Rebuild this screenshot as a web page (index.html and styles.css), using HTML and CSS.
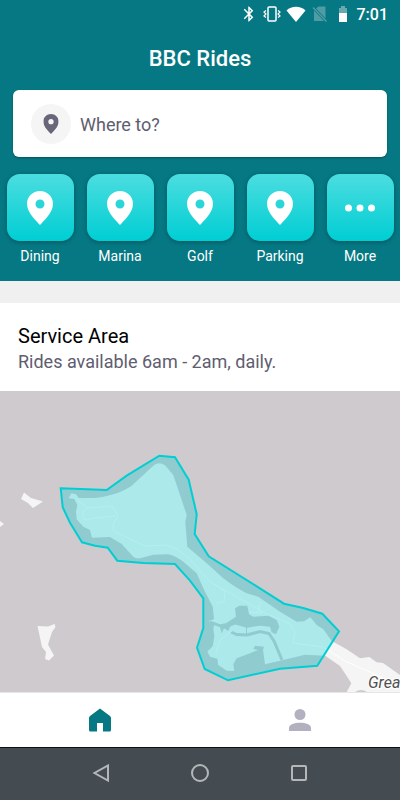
FILE: index.html
```html
<!DOCTYPE html>
<html lang="en">
<head>
    <meta charset="UTF-8">
    <meta name="viewport" content="width=device-width, initial-scale=1.0">
    <title>BBC Rides</title>
    <link rel="stylesheet" href="styles.css">
</head>
<body>

    <!-- Shared pin shape -->
    <svg class="symbols" aria-hidden="true">
        <symbol id="pin" viewBox="0 0 26 34">
            <path fill-rule="evenodd" d="M13 0C5.800 0 0 5.600 0 12.800C0 22 9 29.500 13 34C17 29.500 26 22 26 12.800C26 5.600 20.200 0 13 0ZM13 8.500A4.500 4.500 0 1 1 13 17.500A4.500 4.500 0 1 1 13 8.500Z"/>
        </symbol>
    </svg>

    <header class="header">
        <div class="status-bar">
            <svg class="status-icon" viewBox="0 0 24 24" fill="#fff"><path d="M17.710 7.710L12 2h-1v7.590L6.410 5 5 6.410 10.590 12 5 17.590 6.410 19 11 14.410V22h1l5.710-5.710-4.300-4.290 4.300-4.290zM13 5.830l1.880 1.880L13 9.590V5.830zm1.880 10.460L13 18.170v-3.760l1.880 1.880z"/></svg>
            <svg class="status-icon" viewBox="0 0 18 18" fill="none" stroke="#fff" stroke-width="1.500"><rect x="5" y="2" width="8" height="14" rx="1"/><path d="M3 5.500L1 7L3 9L1 11L3 12.500M15 5.500L17 7L15 9L17 11L15 12.500" stroke-width="1.200"/></svg>
            <svg class="status-wifi" viewBox="0 0 20 16" fill="#fff"><path d="M10 16L.5 4.500C5.500-.5 14.500-.5 19.500 4.500Z"/></svg>
            <svg class="status-icon" viewBox="0 0 18 18"><path d="M3 5.500V16H13ZM5 3.500L7.500 1.500H14.500V13.500Z" fill="#4f9ca5"/><path d="M2 2.500L15.500 16.500" stroke="#4f9ca5" stroke-width="1.500"/></svg>
            <svg class="status-icon" viewBox="0 0 18 18"><path d="M5 3H7V1H11V3H13V8H5Z" fill="#67a9b0"/><path d="M5 8H13V17H5Z" fill="#fff"/></svg>
            <span class="clock">7:01</span>
        </div>

        <h1 class="title">BBC Rides</h1>

        <form class="search">
            <label for="destination" class="search-icon" aria-label="Destination">
                <svg width="16" height="20" viewBox="0 0 26 34" fill="#686678"><use href="#pin"/></svg>
            </label>
            <input type="text" id="destination" class="search-input" placeholder="Where to?">
        </form>

        <div class="shortcuts">
            <button type="button" class="shortcut">
                <span class="tile"><svg width="26" height="34"><use href="#pin"/></svg></span>
                <span>Dining</span>
            </button>
            <button type="button" class="shortcut">
                <span class="tile"><svg width="26" height="34"><use href="#pin"/></svg></span>
                <span>Marina</span>
            </button>
            <button type="button" class="shortcut">
                <span class="tile"><svg width="26" height="34"><use href="#pin"/></svg></span>
                <span>Golf</span>
            </button>
            <button type="button" class="shortcut">
                <span class="tile"><svg width="26" height="34"><use href="#pin"/></svg></span>
                <span>Parking</span>
            </button>
            <button type="button" class="shortcut">
                <span class="tile"><svg width="32" height="8"><circle cx="4.500" cy="4" r="3.500"/><circle cx="16" cy="4" r="3.500"/><circle cx="27.500" cy="4" r="3.500"/></svg></span>
                <span>More</span>
            </button>
        </div>
    </header>

    <section class="service-area">
        <h2 class="service-title">Service Area</h2>
        <p class="service-hours">Rides available 6am - 2am, daily.</p>
    </section>

    <main class="map">
        <svg class="map-canvas" viewBox="0 391 400 301" preserveAspectRatio="xMidYMin slice">
            <!-- Small cays -->
            <g fill="#f5f5f5">
                <path d="M24 492.500L31 498L43 501.500L33 508L28 503L21 499Z"/>
                <path d="M0 521L4 524L0 527Z"/>
                <path d="M37.500 626L48 626.500L54.500 624L55.500 627L52 632L48 644.500L54 655.500L49 660.500L45 659L46 652L42 647Z"/>
            </g>

            <!-- Main island -->
            <path fill="#f5f5f5" d="M68.700 498.300L71.300 493.300L76 494.300L78.700 498L95 498Q105 497 113.300 494.300Q124 491 131.700 485.700L153 466Q158 461 165 465.300L173.300 475L186.700 515L185.300 521.700L187.300 546.700L192 550.700L206.700 563.300L223.300 578.300Q236 588 246.700 593.300L258.300 596.700L280 611.700L296.700 621.700L304 621.300L310.300 617.300L316.700 625L323.300 629.300L331.700 641L346.700 649.300L360 658.300L369.300 657L376.700 662.300L383 663L400 675V692H346.700L351.300 683.300L346.700 676L340 666L325.300 655.700L305 654.700L283.300 660L265 664.300L263 650L264 646.700L255 645.700L253.300 649L258 650L250 653.300L236.700 658.300L233.300 664L234.300 671L226.700 670.700L218.300 665L217.300 658.700L210 656.700L207.300 651.700L212.700 646L214.300 636.700L213.300 628.300L214.700 622.700L208.300 621L214 619.300L212.700 606.700L203.300 588.300L196.700 573.300L183.300 561.700Q174 555 168.300 554.300L153.300 554.700L140 558.300Q136 559 133.300 556.700L121.700 544L110 537L92 537.700L90 530L83.300 526.700L76.700 519.300L76 511.700L77.300 505L74.300 499Z"/>

            <!-- Lagoons and canals -->
            <g fill="#cfcace">
                <path d="M210 620.500L220 624.300L226 623.300L236 616.700L235 608.300L239.300 605.700L247.300 605.700L249 614.300L253.300 616.700L268.300 615.700L276.700 620L279.300 626.700L276 634.300L271.700 632.300L270 626.700L260 625.700L246.700 627.700L235 624.500L230 626.700L228.300 631L224 628.300L221.700 633.300L220 627.300L211 624Z"/>
                <path d="M355 692Q361 688 367 692Z"/>
            </g>
            <path fill="none" stroke="#cfcace" stroke-width="3" d="M231 632L236.700 634.500L247 635L260 631.500L269 633.500L274 641L282 660"/>
            <path fill="none" stroke="#cfcace" d="M246.500 626V635"/>

            <!-- Roads -->
            <g fill="none" stroke="#fff" stroke-width="1">
                <path d="M77 500L88 508L112 506L118 516L113 524L114 531L122 535L145 546L166 545L177 549L189 558L210 582L246 602L265 613L290 624L295 632L293 643L323 647L345 661L370 672L400 687"/>
                <path d="M88 508L83 511L83 518L86 520L95 518L116 516M215 584L225 592L224 602L216 603M216 653L220 640L232 631"/>
                <path d="M249 612L262 613L257 605M261 602L257 613"/>
            </g>

            <path class="zone" d="M60.700 488.300L106.700 490L126.700 475.700L159.300 455.700L175 457.300L188.700 479.700L196.700 514.300L194.700 534L208.700 556.300L258.300 587.300L284 603.700L303.300 608L322.300 613.700L339 631.300L317.300 665.700L280 668.700L228 680.300L204.700 669L197 647.700L203.300 628V598.300L190 580.700L175 564L143.300 563L117.300 560.700L107.700 547.700L95 545.700L82 542.300L70 522.700L62.700 507.300Z"/>
            <text class="place" x="368" y="688">Grea</text>
        </svg>
    </main>

    <nav class="tabs">
        <button type="button" class="tab" aria-label="Home">
            <svg width="24" height="24" fill="#057883"><path d="M12 .500L22 8Q23 9 23 10V22Q23 23.500 21.500 23.500H15V15H9V23.500H2.500Q1 23.500 1 22V10Q1 9 2 8Z"/></svg>
        </button>
        <button type="button" class="tab" aria-label="Profile">
            <svg width="24" height="24" fill="#b3b1bf"><circle cx="12" cy="6.500" r="5.500"/><path d="M1 23V20C1 13 23 13 23 20V23Z"/></svg>
        </button>
    </nav>

    <footer class="system-bar">
        <button type="button" class="system-button" aria-label="Back"><svg width="18" height="18"><path d="M16 1.500V16.500L2.500 9Z"/></svg></button>
        <button type="button" class="system-button" aria-label="Home screen"><svg width="18" height="18"><circle cx="9" cy="9" r="8"/></svg></button>
        <button type="button" class="system-button" aria-label="Recent apps"><svg width="18" height="18"><rect x="2" y="2" width="14" height="14" rx="1"/></svg></button>
    </footer>

</body>
</html>
```
FILE: styles.css
```css
* {
    box-sizing: border-box;
}

body {
    background-color: #ffffff;
    font-family: Roboto, sans-serif;
    margin: 0;
    min-height: 100vh;
    display: flex;
    flex-direction: column;
}

h1, h2, p {
    margin: 0;
    font-weight: 400;
}

button {
    background: none;
    border: none;
    padding: 0;
    font-family: inherit;
    cursor: pointer;
}

svg {
    display: block;
}

.symbols {
    position: absolute;
    width: 0;
    height: 0;
}

/* Header */
.header {
    background-color: #057883;
    color: #ffffff;
    padding-bottom: 16px;
}

.status-bar {
    display: flex;
    align-items: center;
    justify-content: flex-end;
    gap: 5px;
    height: 28px;
    padding-right: 12px;
}

.status-icon {
    width: 18px;
    height: 18px;
}

.status-wifi {
    width: 20px;
    height: 16px;
}

.clock {
    font-size: 16px;
    font-weight: 500;
}

.title {
    font-size: 22px;
    font-weight: 500;
    line-height: 28px;
    padding: 17px 0;
    text-align: center;
}

.search {
    display: flex;
    align-items: center;
    gap: 8px;
    height: 67px;
    margin: 0 13px 17px;
    padding: 0 18px;
    background-color: #ffffff;
    border-radius: 6px;
    box-shadow: 0 1px 2px rgba(0, 0, 0, 0.3);
}

.search-icon {
    display: flex;
    flex: none;
    align-items: center;
    justify-content: center;
    width: 40px;
    height: 40px;
    background-color: #f5f5f5;
    border-radius: 50%;
}

.search-input {
    flex: 1;
    min-width: 0;
    padding: 2px 1px 0;
    border: none;
    outline: none;
    font-family: inherit;
    font-size: 18px;
}

.search-input::placeholder {
    color: #605d70;
}

.shortcuts {
    display: grid;
    grid-template-columns: repeat(5, 1fr);
}

.shortcut {
    display: flex;
    flex-direction: column;
    align-items: center;
    gap: 6px;
    color: #ffffff;
    font-size: 14px;
    line-height: 18px;
}

.tile {
    display: flex;
    align-items: center;
    justify-content: center;
    width: 67px;
    height: 67px;
    background: linear-gradient(#4bdde0, #00ced3);
    border-radius: 13px;
    box-shadow: 0 1px 4px rgba(0, 0, 0, 0.3);
    fill: #ffffff;
}

/* Service area */
.service-area {
    border-top: 22px solid #f0f0f0;
    padding: 20px 18px 16px;
}

.service-title {
    font-size: 20px;
    line-height: 26px;
    color: #000000;
}

.service-hours {
    font-size: 18px;
    line-height: 26px;
    color: #605d70;
}

/* Map */
.map {
    flex: 1;
    display: flex;
    min-height: 300px;
    background-color: #cfcace;
}

.map-canvas {
    width: 100%;
}

.zone {
    fill: rgba(0, 206, 211, 0.3);
    stroke: #00ced3;
    stroke-width: 2px;
}

.place {
    font-size: 16px;
    font-style: italic;
    fill: #505050;
    stroke: #ffffff;
    stroke-width: 2px;
    paint-order: stroke;
}

/* Bottom tabs */
.tabs {
    display: flex;
    height: 56px;
    border-top: 1px solid #e6e6e6;
    border-bottom: 1px solid #111111;
}

.tab {
    flex: 1;
    display: flex;
    align-items: center;
    justify-content: center;
}

.system-bar {
    display: flex;
    justify-content: center;
    gap: 81px;
    height: 52px;
    padding-bottom: 2px;
    background-color: #444c51;
}

.system-button svg {
    fill: none;
    stroke: #b4b7b9;
    stroke-width: 2px;
}
```
